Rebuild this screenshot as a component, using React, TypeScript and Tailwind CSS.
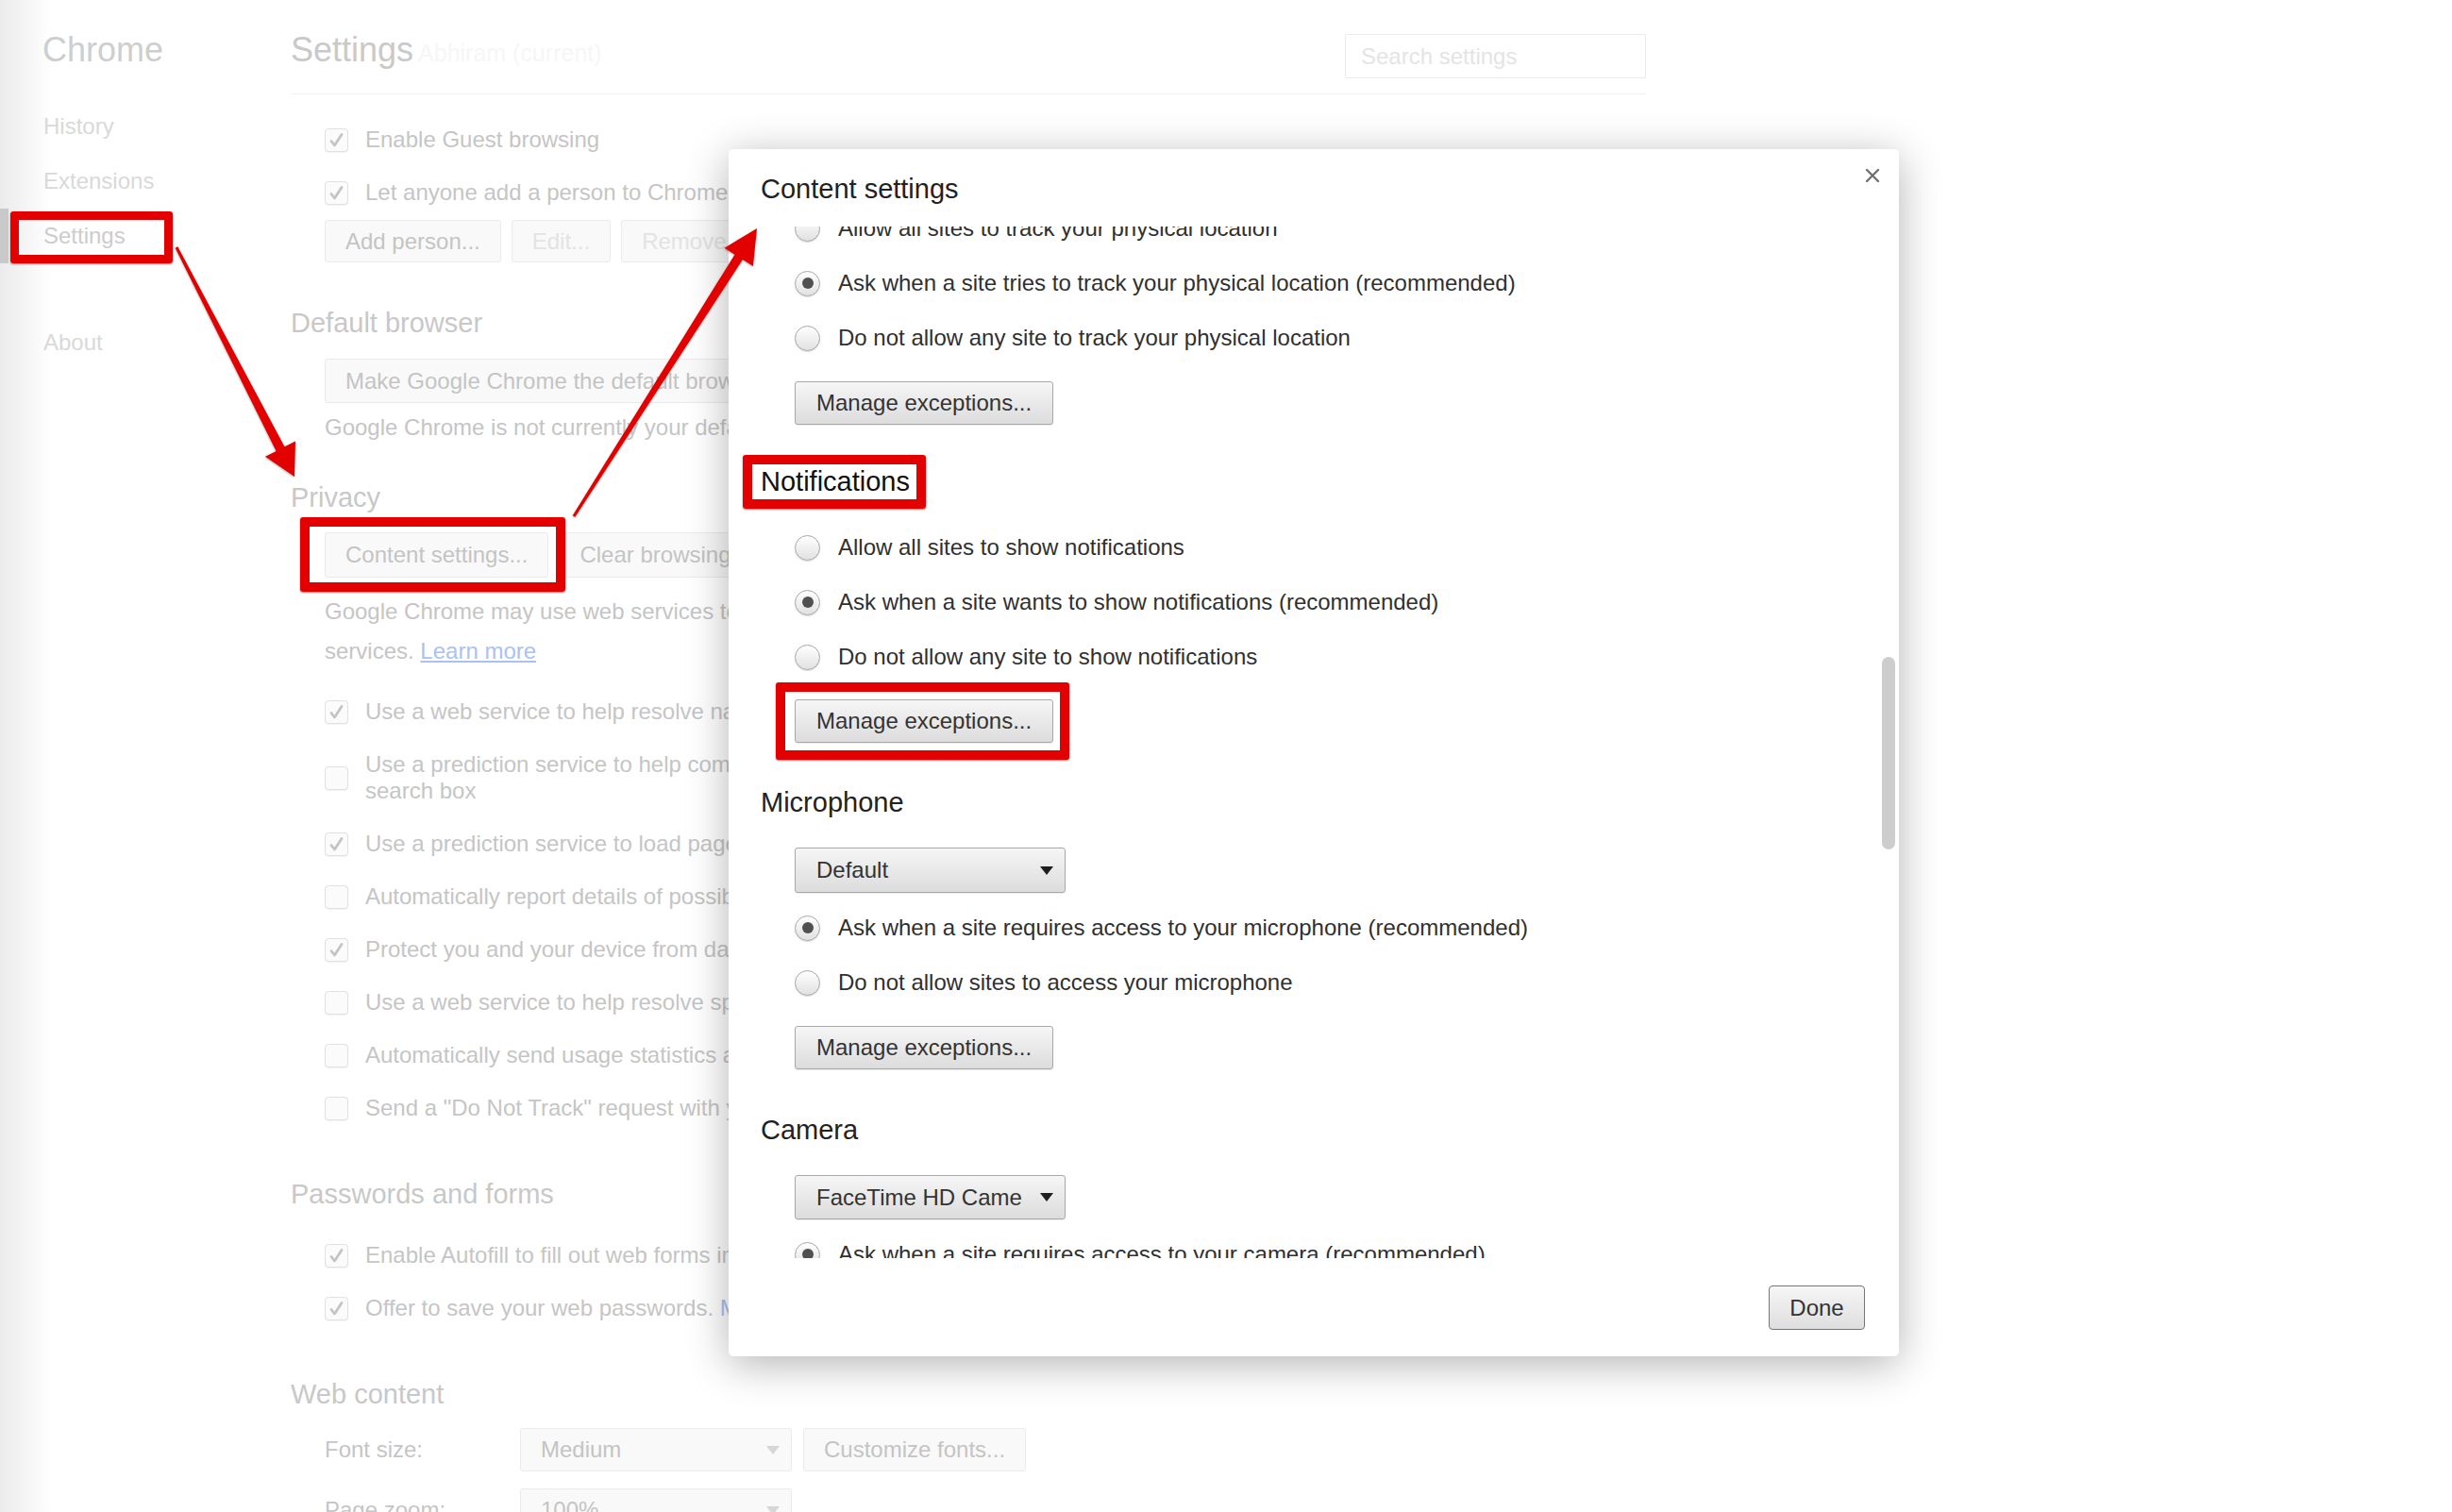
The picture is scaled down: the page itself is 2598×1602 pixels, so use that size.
import React from 'react';

type Kids = { children?: React.ReactNode };

// ---------- faded settings page (behind the dialog) ----------

function Check({ on }: { on?: boolean }) {
  return (
    <span className="w-[25px] h-[25px] shrink-0 rounded-[4px] border border-[#e1e1e1] bg-[#fbfbfb] shadow-[0_1px_1px_rgba(0,0,0,0.05)] flex items-center justify-center">
      {on && (
        <svg width="17" height="17" viewBox="0 0 17 17">
          <path d="M3 9.5 L6.5 14 L14 2.5" fill="none" stroke="#c4c4c4" strokeWidth="2.8" strokeLinecap="round" strokeLinejoin="round" />
        </svg>
      )}
    </span>
  );
}

function CheckRow({ on, children }: { on?: boolean } & Kids) {
  return (
    <div className="h-[56px] pl-[36px] flex items-center gap-[18px] whitespace-nowrap">
      <Check on={on} />
      <span>{children}</span>
    </div>
  );
}

function PageButton({ children, disabled, className }: { disabled?: boolean; className?: string } & Kids) {
  return (
    <div
      className={`px-[21px] flex items-center border border-[#ebebeb] rounded-[3px] bg-[#f9f9f9] text-[24px] whitespace-nowrap ${
        disabled ? 'text-[#e3e3e3]' : 'text-[#c4c4c4]'
      } ${className ?? 'h-[45px]'}`}
    >
      {children}
    </div>
  );
}

function PageSelect({ children }: Kids) {
  return (
    <div className="w-[288px] h-[46px] pl-[21px] pr-[12px] flex items-center justify-between border border-[#ebebeb] rounded-[3px] bg-[#f9f9f9] text-[#c4c4c4]">
      <span>{children}</span>
      <span className="w-0 h-0 border-l-[7px] border-r-[7px] border-t-[9px] border-l-transparent border-r-transparent border-t-[#d6d6d6]" />
    </div>
  );
}

function Heading({ children, className }: { className?: string } & Kids) {
  return <h2 className={`text-[29px] leading-[40px] text-[#c8c8c8] whitespace-nowrap ${className ?? ''}`}>{children}</h2>;
}

function Sidebar() {
  const items = [
    { label: 'History' },
    { label: 'Extensions' },
    { label: 'Settings', selected: true },
  ];
  return (
    <aside className="w-[308px] shrink-0 h-full bg-[linear-gradient(to_right,#ebebeb,#ffffff_55px)]">
      <div className="pl-[45px] pt-[35px] text-[36px] leading-[36px] text-[#cecece]">Chrome</div>
      <nav className="mt-[34px] flex flex-col">
        {items.map((it) => (
          <div key={it.label} className="flex h-[58px] items-center">
            <span className={`w-[9px] self-stretch ${it.selected ? 'bg-[#c9c9c9]' : ''}`} />
            <span className={`ml-[37px] text-[24px] ${it.selected ? 'text-[#cccccc]' : 'text-[#d9d9d9]'}`}>{it.label}</span>
          </div>
        ))}
        <div className="flex h-[58px] items-center mt-[55px]">
          <span className="w-[9px] self-stretch" />
          <span className="ml-[37px] text-[24px] text-[#d9d9d9]">About</span>
        </div>
      </nav>
    </aside>
  );
}

function Page() {
  return (
    <main className="w-[1436px] shrink-0 flex flex-col text-[24px] text-[#c5c5c5]">
      <header className="h-[100px] shrink-0 border-b border-[#f2f2f2] flex justify-between items-start">
        <div className="flex items-baseline pt-[35px]">
          <h1 className="text-[36px] leading-[36px] text-[#c9c9c9]">Settings</h1>
          <span className="ml-[5px] text-[25px] text-[#f6f6f6]">Abhiram (current)</span>
        </div>
        <div className="mt-[36px] w-[319px] h-[47px] border border-[#ebebeb] rounded-[2px] flex items-center pl-[16px] text-[24px] text-[#e4e4e4]">
          Search settings
        </div>
      </header>

      <div className="mt-[20px]">
        <CheckRow on>Enable Guest browsing</CheckRow>
        <CheckRow on>Let anyone add a person to Chrome</CheckRow>
      </div>
      <div className="mt-[1px] pl-[36px] flex gap-[11px]">
        <PageButton>Add person...</PageButton>
        <PageButton disabled>Edit...</PageButton>
        <PageButton disabled>Remove...</PageButton>
      </div>

      <Heading className="mt-[44px]">Default browser</Heading>
      <div className="mt-[18px] pl-[36px] flex">
        <PageButton className="h-[47px]">Make Google Chrome the default browser</PageButton>
      </div>
      <p className="mt-[12px] pl-[36px] leading-[28px] whitespace-nowrap">Google Chrome is not currently your default browser.</p>

      <Heading className="mt-[40px]">Privacy</Heading>
      <div className="mt-[17px] pl-[36px] flex gap-[11px]">
        <PageButton className="h-[48px]">Content settings...</PageButton>
        <PageButton className="h-[48px]">Clear browsing data...</PageButton>
      </div>
      <div className="mt-[15px] pl-[36px] leading-[42px] whitespace-nowrap">
        <div>Google Chrome may use web services to improve your browsing experience. You may optionally disable these</div>
        <div>
          services. <span className="text-[#a9c2f2] underline">Learn more</span>
        </div>
      </div>

      <div className="mt-[15px]">
        <CheckRow on>Use a web service to help resolve navigation errors</CheckRow>
        <div className="h-[84px] pl-[36px] flex items-center gap-[18px] whitespace-nowrap">
          <Check />
          <div className="leading-[28px]">
            <div>Use a prediction service to help complete searches and URLs typed in the address bar or the app launcher</div>
            <div>search box</div>
          </div>
        </div>
        <CheckRow on>Use a prediction service to load pages more quickly</CheckRow>
        <CheckRow>Automatically report details of possible security incidents to Google</CheckRow>
        <CheckRow on>Protect you and your device from dangerous sites</CheckRow>
        <CheckRow>Use a web service to help resolve spelling errors</CheckRow>
        <CheckRow>Automatically send usage statistics and crash reports to Google</CheckRow>
        <CheckRow>Send a "Do Not Track" request with your browsing traffic</CheckRow>
      </div>

      <Heading className="mt-[43px]">Passwords and forms</Heading>
      <div className="mt-[17px]">
        <CheckRow on>
          Enable Autofill to fill out web forms in a single click. <span className="text-[#a9c2f2]">Manage Autofill settings</span>
        </CheckRow>
        <CheckRow on>
          Offer to save your web passwords. <span className="text-[#a9c2f2]">Manage passwords</span>
        </CheckRow>
      </div>

      <Heading className="mt-[43px]">Web content</Heading>
      <div className="mt-[16px] pl-[36px] flex items-center">
        <span className="w-[207px]">Font size:</span>
        <PageSelect>Medium</PageSelect>
        <PageButton className="ml-[12px] h-[46px]">Customize fonts...</PageButton>
      </div>
      <div className="mt-[18px] pl-[36px] flex items-center">
        <span className="w-[207px]">Page zoom:</span>
        <PageSelect>100%</PageSelect>
      </div>
    </main>
  );
}

// ---------- Content settings dialog ----------

function Radio({ on }: { on?: boolean }) {
  return (
    <span className="w-[27px] h-[27px] shrink-0 rounded-full border border-[#a6a6a6] bg-[linear-gradient(#ffffff,#e1e1e1)] shadow-[0_1px_1px_rgba(0,0,0,0.14)] flex items-center justify-center">
      {on && <span className="w-[12px] h-[12px] rounded-full bg-[#505050]" />}
    </span>
  );
}

function RadioRow({ on, children }: { on?: boolean } & Kids) {
  return (
    <div className="h-[58px] shrink-0 pl-[36px] flex items-center gap-[19px] whitespace-nowrap">
      <Radio on={on} />
      <span>{children}</span>
    </div>
  );
}

function DButton({ children, className }: { className?: string } & Kids) {
  return (
    <div
      className={`h-[46px] shrink-0 px-[22px] flex items-center border border-[#a8a8a8] rounded-[3px] bg-[linear-gradient(#f6f6f6,#dcdcdc)] shadow-[0_1px_1px_rgba(0,0,0,0.08)] text-[24px] text-[#333333] whitespace-nowrap ${className ?? ''}`}
    >
      {children}
    </div>
  );
}

function DSelect({ children, className }: { className?: string } & Kids) {
  return (
    <div
      className={`ml-[36px] w-[287px] shrink-0 pl-[22px] pr-[12px] flex items-center justify-between border border-[#a8a8a8] rounded-[3px] bg-[linear-gradient(#f6f6f6,#dcdcdc)] shadow-[0_1px_1px_rgba(0,0,0,0.08)] text-[24px] text-[#333333] whitespace-nowrap ${className ?? ''}`}
    >
      <span>{children}</span>
      <span className="w-0 h-0 border-l-[7px] border-r-[7px] border-t-[9px] border-l-transparent border-r-transparent border-t-[#1e1e1e]" />
    </div>
  );
}

function DHeading({ children, className }: { className?: string } & Kids) {
  return <h3 className={`text-[29px] leading-[40px] h-[40px] shrink-0 text-[#222222] ${className ?? ''}`}>{children}</h3>;
}

function ContentSettingsDialog() {
  return (
    <div className="absolute left-[772px] top-[158px] w-[1240px] h-[1279px] bg-white rounded-[5px] shadow-[0_8px_45px_rgba(0,0,0,0.3)] flex flex-col z-10">
      <div className="relative h-[82px] shrink-0">
        <h2 className="pl-[34px] pt-[25px] text-[29px] leading-[34px] text-[#222222]">Content settings</h2>
        <svg className="absolute right-[20px] top-[20px]" width="16" height="16" viewBox="0 0 16 16">
          <path d="M2 2 L14 14 M14 2 L2 14" stroke="#717171" strokeWidth="2.4" strokeLinecap="round" />
        </svg>
      </div>

      <div className="relative h-[1093px] shrink-0 overflow-hidden">
        <div className="-mt-[27px] pl-[34px] flex flex-col items-start text-[24px] text-[#303030]">
          <RadioRow>Allow all sites to track your physical location</RadioRow>
          <RadioRow on>Ask when a site tries to track your physical location (recommended)</RadioRow>
          <RadioRow>Do not allow any site to track your physical location</RadioRow>
          <DButton className="mt-[17px] ml-[36px]">Manage exceptions...</DButton>

          <div className="mt-[32px] -ml-[19px] h-[57px] shrink-0 border-[10px] border-[#e30000] rounded-[3px] shadow-[0_1px_2px_rgba(0,0,0,0.45)] pl-[9px] pr-[7px]">
            <h3 className="text-[29px] leading-[37px] text-[#111111]">Notifications</h3>
          </div>
          <div className="mt-[12px] flex flex-col">
            <RadioRow>Allow all sites to show notifications</RadioRow>
            <RadioRow on>Ask when a site wants to show notifications (recommended)</RadioRow>
            <RadioRow>Do not allow any site to show notifications</RadioRow>
          </div>
          <div className="-mt-[2px] ml-[16px] shrink-0 border-[10px] border-[#e30000] rounded-[3px] shadow-[0_1px_2px_rgba(0,0,0,0.45)] pl-[10px] pr-[7px] py-[8px] bg-white">
            <DButton>Manage exceptions...</DButton>
          </div>

          <DHeading className="mt-[25px]">Microphone</DHeading>
          <DSelect className="mt-[28px] h-[48px]">Default</DSelect>
          <div className="mt-[8px] flex flex-col">
            <RadioRow on>Ask when a site requires access to your microphone (recommended)</RadioRow>
            <RadioRow>Do not allow sites to access your microphone</RadioRow>
          </div>
          <DButton className="mt-[17px] ml-[36px]">Manage exceptions...</DButton>

          <DHeading className="mt-[44px]">Camera</DHeading>
          <DSelect className="mt-[28px] h-[47px]">FaceTime HD Came</DSelect>
          <div className="mt-[8px] flex flex-col">
            <RadioRow on>Ask when a site requires access to your camera (recommended)</RadioRow>
            <RadioRow>Do not allow sites to access your camera</RadioRow>
          </div>
        </div>
        {/* scrollbar thumb */}
        <div className="absolute right-[4px] top-[456px] w-[14px] h-[204px] rounded-full bg-[#cdcdcd]" />
      </div>

      <div className="flex-1 flex justify-end items-start pt-[29px] pr-[36px]">
        <div className="w-[102px] h-[47px] flex items-center justify-center border border-[#767676] rounded-[4px] bg-[linear-gradient(#f6f6f6,#dedede)] text-[24px] text-[#333333]">
          Done
        </div>
      </div>
    </div>
  );
}

// ---------- red annotation marks drawn on top ----------

function Annotations() {
  return (
    <div className="absolute inset-0 pointer-events-none z-20">
      <div className="absolute left-[11px] top-[224px] w-[172px] h-[55px] border-[9px] border-[#e30000] rounded-[3px] shadow-[0_1px_2px_rgba(0,0,0,0.45)]" />
      <div className="absolute left-[318px] top-[548px] w-[281px] h-[79px] border-[10px] border-[#e30000] rounded-[3px] shadow-[0_1px_2px_rgba(0,0,0,0.45)]" />
      <svg className="absolute left-0 top-0 drop-shadow-[0_1px_1px_rgba(0,0,0,0.35)]" width="2598" height="1602" viewBox="0 0 2598 1602">
        <path d="M185.7 262.7 L292.6 477.9 L281 483.8 L312 505 L313 467.4 L301.5 473.3 L188.3 261.3 Z" fill="#e30000" />
        <path d="M609.3 547.8 L786.9 275.1 L797.9 282.1 L802 242 L767.5 262.7 L778.5 269.7 L606.7 546.2 Z" fill="#e30000" />
      </svg>
    </div>
  );
}

export default function App() {
  return (
    <div className="relative w-[2598px] h-[1602px] overflow-hidden bg-white font-['Liberation_Sans',Arial,sans-serif]">
      <div className="flex h-full">
        <Sidebar />
        <Page />
      </div>
      <ContentSettingsDialog />
      <Annotations />
    </div>
  );
}
